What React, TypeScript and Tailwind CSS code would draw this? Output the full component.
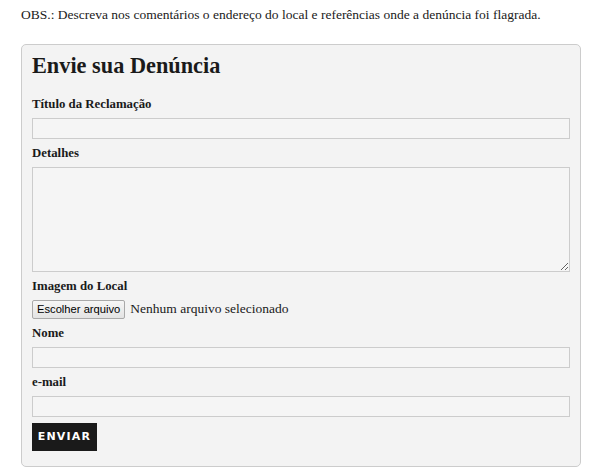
import React from "react";

function Label({ children }: { children: React.ReactNode }) {
  return (
    <div className="h-[18px] leading-[18px] text-[12.8px] font-bold text-[#1a1a1a]">
      {children}
    </div>
  );
}

function Field() {
  return <div className="h-[21px] w-full border border-[#cccccc] bg-[#f5f5f5]" />;
}

export default function App() {
  return (
    <div className="w-[602px] h-[474px] bg-white px-[21px] pt-[6px] font-['Liberation_Serif','DejaVu_Serif',serif]">
      <p className="text-[13.5px] leading-[18px] text-[#1a1a1a]">
        OBS.: Descreva nos comentários o endereço do local e referências onde a denúncia foi flagrada.
      </p>
      <div className="mt-[20px] w-[560px] rounded-[5px] border border-[#cccccc] bg-[#f3f3f3] pl-[10px] pr-[10px] pt-[6px] pb-[15px]">
        <h2 className="h-[30px] leading-[30px] text-[22.3px] font-bold text-[#1a1a1a]">
          Envie sua Denúncia
        </h2>
        <div className="mt-[14px] flex flex-col gap-[5px]">
          <Label>Título da Reclamação</Label>
          <Field />
          <Label>Detalhes</Label>
          <textarea className="block h-[105px] w-full border border-[#cccccc] bg-[#f5f5f5] outline-none" />
          <Label>Imagem do Local</Label>
          <div className="flex items-center h-[19px]">
            <div className="h-[19px] px-[4px] flex items-center border border-[#a9a9a9] rounded-[2px] bg-gradient-to-b from-[#f6f6f6] to-[#e3e3e3] text-[11.2px] text-black font-['Liberation_Sans',Arial,sans-serif]">
              Escolher arquivo
            </div>
            <span className="ml-[5px] text-[13.5px] text-[#1a1a1a]">
              Nenhum arquivo selecionado
            </span>
          </div>
          <Label>Nome</Label>
          <Field />
          <Label>e-mail</Label>
          <Field />
          <div className="mt-[1px]">
            <button className="h-[28px] w-[65px] bg-[#1a1a1a] text-white text-[11px] font-bold tracking-[1.2px] font-['DejaVu_Sans',Verdana,sans-serif]">
              ENVIAR
            </button>
          </div>
        </div>
      </div>
    </div>
  );
}
